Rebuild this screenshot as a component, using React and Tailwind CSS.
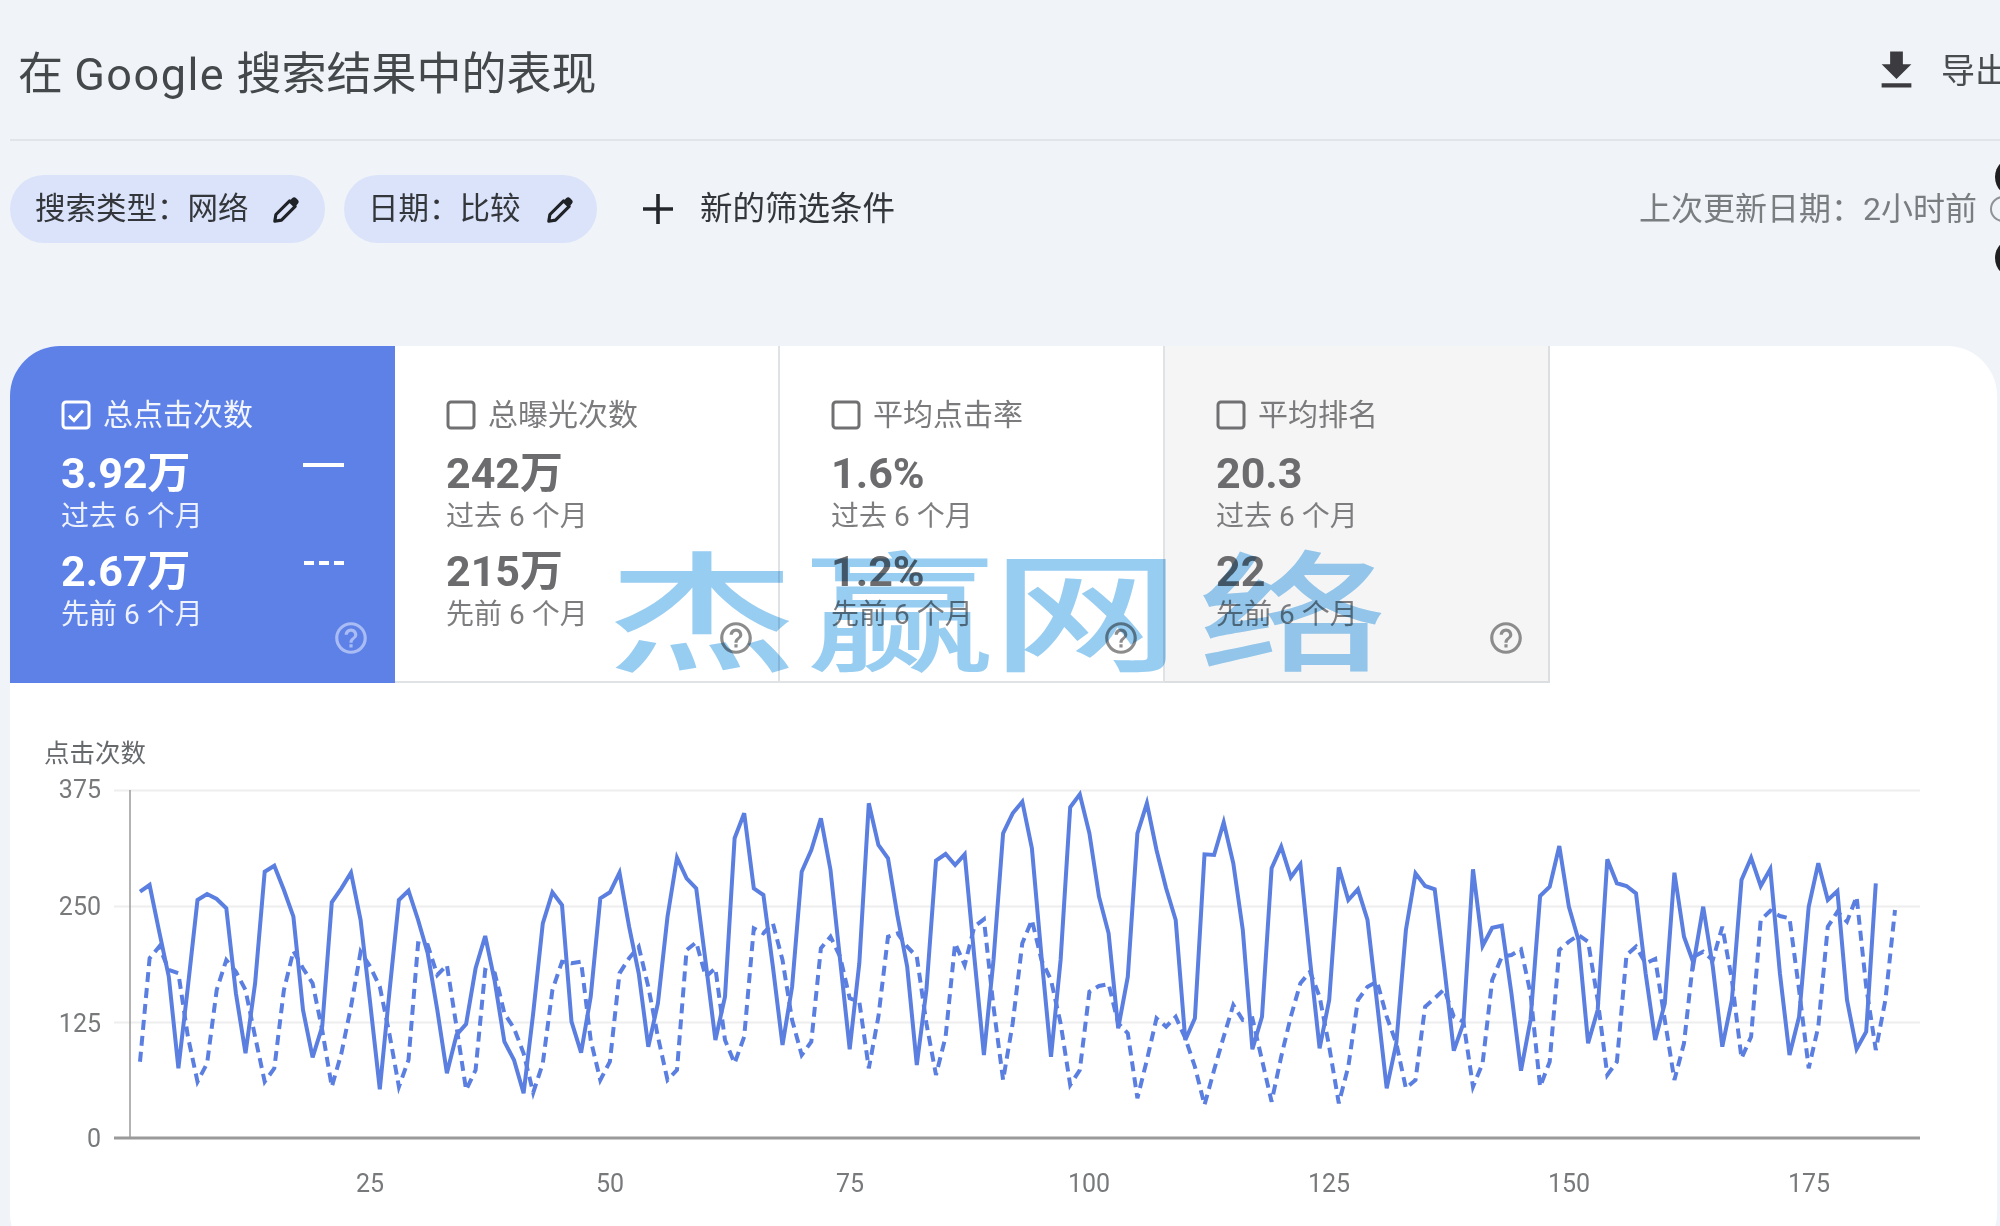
const solidA = [515,495,635,770,1045,800,540,522,537,565,820,1000,790,455,437,510,590,870,1012,920,547,505,458,600,850,1108,820,540,512,600,700,870,1060,945,912,745,648,785,965,1020,1120,880,610,517,555,905,998,830,535,517,458,620,760,980,850,590,413];
const solidB = [355,385,610,840,710,235,160,385,405,620,855,680,335,270,175,330,600,868,610,130,255,295,470,620,915,690,302,282,315,283,590,885,600,220,160,125,265,590,890,600,142,103,220,410,520,805,650,220,130,270,385,480,840,775,283,285,187,310,510,868,770,325,260,352,313,600,865,720,322,420,388,480,730,985,850,510,340,378,388,620,872,790,328,558,503,497,700,932,780,408,380,258,440,540,850,750,298,370,378,400,640,840,730,338,530,610,440,620,860,720,360,293,378,327,640,885,770,440,310,420,393,720,867,815,370];
const dashA = [1025,715,680,750,760,950,1085,1030,810,720,755,810,950,1085,1045,810,693,745,790,930,1100,1000,860,695,740,800,940,1100,1020,670,675,765,735,920,1110,1050,750,760,880,925,1000,1118,1030,810,725,730,725,960,1080,1025,760,715,680,800,950,1080,1050];
const dashB = [570,547,650,625,840,910,830,505,520,490,600,780,885,845,565,530,590,715,725,925,770,530,520,560,590,790,945,830,550,615,500,478,740,960,790,550,480,600,660,790,975,930,695,678,672,790,820,1015,900,775,800,770,835,920,1035,930,830,735,780,775,900,1025,890,770,670,635,710,860,1030,920,720,680,665,770,850,985,960,740,715,688,770,785,980,910,660,590,585,568,700,980,905,570,545,525,545,720,945,905,585,560,610,597,780,960,850,590,575,600,500,660,895,830,480,452,468,475,690,925,800,500,455,485,410,680,870,720,450];

const toPts = (a, b) =>
  [...a.map((z) => 720 + z / 3), ...b.map((z) => 760 + z / 3)]
    .map((y, i) => `${(140 + i * 9.59).toFixed(1)},${y.toFixed(1)}`)
    .join(" ");

const HELP = "M11 18h2v-2h-2v2zm1-16C6.48 2 2 6.48 2 12s4.48 10 10 10 10-4.48 10-10S17.52 2 12 2zm0 18c-4.41 0-8-3.59-8-8s3.59-8 8-8 8 3.59 8 8-3.59 8-8 8zm0-14c-2.21 0-4 1.79-4 4h2c0-1.1.9-2 2-2s2 .9 2 2c0 2-3 1.75-3 5h2c0-2.25 3-2.5 3-5 0-2.21-1.79-4-4-4z";

function Help({ className }) {
  return (
    <svg viewBox="0 0 24 24" className={className} fill="currentColor">
      <path d={HELP} />
    </svg>
  );
}

function Pencil() {
  return (
    <svg viewBox="0 0 26 26" className="w-[29px] h-[29px] shrink-0 text-[#1f2226]">
      <path d="M2.5 23.5l1-6L15.8 5.2l5 5L8.5 22.5z" fill="none" stroke="currentColor" strokeWidth="2.8" strokeLinejoin="round" />
      <path d="M15.5 5.5l2.5-2.5a2.6 2.6 0 0 1 3.7 0l1.3 1.3a2.6 2.6 0 0 1 0 3.7l-2.5 2.5z" fill="currentColor" />
    </svg>
  );
}

function Chip({ text, className }) {
  return (
    <div className={`flex items-center h-[68px] rounded-full bg-[#dae3f9] text-[#33363a] text-[30.5px] ${className}`}>
      <span>{text}</span>
      <Pencil />
    </div>
  );
}

function Tab({ label, v1, v2, active, className }) {
  const num = active ? "text-white" : "text-[#6c6c6e]";
  const sub = active ? "text-[#eef2fd]" : "text-[#7d7d7f]";
  return (
    <div className={`relative w-[385px] h-[337px] shrink-0 pl-[51px] pr-[51px] pt-[52px] ${className}`}>
      <div className={`flex items-center h-[34px] gap-[12px] text-[30px] leading-[34px] ${active ? "text-[#f4f6fe]" : "text-[#7b7b7d]"}`}>
        {active ? (
          <svg viewBox="0 0 30 30" className="w-[30px] h-[30px] shrink-0">
            <rect x="2" y="2" width="26" height="26" rx="3" fill="none" stroke="white" strokeWidth="3" />
            <path d="M8 15.5l5 5 9-10" fill="none" stroke="white" strokeWidth="3" />
          </svg>
        ) : (
          <svg viewBox="0 0 30 30" className="w-[30px] h-[30px] shrink-0">
            <rect x="2" y="2" width="26" height="26" rx="3" fill="none" stroke="#707072" strokeWidth="3" />
          </svg>
        )}
        <span>{label}</span>
      </div>
      <div className="flex justify-between mt-[16px] h-[50px]">
        <div className={`text-[43px] leading-[50px] font-bold ${num}`}>{v1}</div>
        {active && <div className="w-[41px] h-[4px] mt-[15px] bg-white" />}
      </div>
      <div className={`h-[34px] text-[28px] leading-[34px] mt-[2px] ${sub}`}>过去 6 个月</div>
      <div className="flex justify-between mt-[12px] h-[50px]">
        <div className={`text-[43px] leading-[50px] font-bold ${num}`}>{v2}</div>
        {active && (
          <div className="flex gap-[5px] mt-[15px] -ml-[3px]">
            <div className="w-[10px] h-[4px] bg-white" />
            <div className="w-[10px] h-[4px] bg-white" />
            <div className="w-[10px] h-[4px] bg-white" />
          </div>
        )}
      </div>
      <div className={`h-[34px] text-[28px] leading-[34px] mt-[2px] ${sub}`}>先前 6 个月</div>
      <Help className={`absolute left-[322px] top-[273px] w-[38px] h-[38px] ${active ? "text-[#a9bcf3]" : "text-[#8c8c8c]"}`} />
    </div>
  );
}

export default function App() {
  const grid = [790.5, 906.5, 1022.5];
  return (
    <div lang="zh-CN" className="relative w-full h-[1226px] overflow-hidden bg-[#f0f4f8] font-[Roboto,'Noto_Sans_CJK_SC',sans-serif]">
      <header className="ml-[10px] h-[141px] pl-[8px] pt-[10px] pr-0 flex items-center justify-between border-b-2 border-[#e1e5e9]">
        <h1 className="text-[45px] leading-[60px] text-[#45484b] whitespace-nowrap">
          在 <span className="tracking-[1.5px]">Google</span> 搜索结果中的表现
        </h1>
        <div className="flex items-center gap-[19px] -mr-[9px] -mt-[8px] shrink-0">
          <svg viewBox="0 0 24 24" className="w-[51px] h-[51px]" fill="#3c3c40">
            <path d="M19 9h-4V3H9v6H5l7 7 7-7zM5 18v2h14v-2H5z" />
          </svg>
          <span className="text-[34px] leading-[40px] text-[#4a4d50] whitespace-nowrap">导出</span>
        </div>
      </header>

      <div className="ml-[10px] h-[205px] pt-[34px]">
        <div className="flex items-center h-[68px]">
          <Chip text="搜索类型：网络" className="w-[315px] pl-[25px] gap-[23px]" />
          <Chip text="日期：比较" className="w-[253px] pl-[24px] gap-[25px] ml-[19px]" />
          <svg viewBox="0 0 30 30" className="w-[30px] h-[30px] ml-[46px] shrink-0">
            <path d="M15 0v30M0 15h30" stroke="#23262a" strokeWidth="3.6" fill="none" />
          </svg>
          <span className="ml-[27px] text-[32.5px] text-[#33363a] whitespace-nowrap">新的筛选条件</span>
          <span className="ml-auto text-[32px] text-[#7a7d80] whitespace-nowrap">上次更新日期：2小时前</span>
          <div className="w-[26px] h-[26px] ml-[13px] -mr-[16px] shrink-0 rounded-full border-[2px] border-[#8f9296]" />
        </div>
      </div>

      <main className="ml-[10px] w-[1987px] h-[917px] bg-white rounded-[50px] overflow-hidden relative">
        <div className="flex">
          <Tab label="总点击次数" v1="3.92万" v2="2.67万" active className="bg-[#5e81e8]" />
          <Tab label="总曝光次数" v1="242万" v2="215万" className="border-r-2 border-b-2 border-[#e0e3e6]" />
          <Tab label="平均点击率" v1="1.6%" v2="1.2%" className="border-r-2 border-b-2 border-[#e0e3e6]" />
          <Tab label="平均排名" v1="20.3" v2="22" className="bg-[#f5f5f6] border-r-2 border-b-2 border-[#dcdfe2]" />
        </div>

        <div className="pl-[34px] pt-[53px] h-[87px] text-[25.5px] leading-[34px] text-[#66696c]">点击次数</div>
        <svg viewBox="10 770 1980 440" className="block w-[1980px] h-[440px]">
          {grid.map((y) => (
            <line key={y} x1="114" x2="1920" y1={y} y2={y} stroke="#eeeeee" strokeWidth="2" />
          ))}
          <line x1="130" x2="130" y1="790" y2="1138" stroke="#9a9a9a" strokeWidth="1.5" />
          <line x1="114" x2="1920" y1="1138" y2="1138" stroke="#9a9a9a" strokeWidth="3" />
          {[["375", 789], ["250", 906], ["125", 1023], ["0", 1138]].map(([t, y]) => (
            <text key={t} x="101" y={y + 9} textAnchor="end" fontSize="25" fill="#77797b">{t}</text>
          ))}
          {[["25", 370], ["50", 610], ["75", 850], ["100", 1089], ["125", 1329], ["150", 1569], ["175", 1809]].map(([t, x]) => (
            <text key={t} x={x} y="1192" textAnchor="middle" fontSize="25" fill="#77797b">{t}</text>
          ))}
          <polyline points={toPts(dashA, dashB)} fill="none" stroke="#5b7fe0" strokeWidth="4" strokeDasharray="10 6" />
          <polyline points={toPts(solidA, solidB)} fill="none" stroke="#5b7fe0" strokeWidth="4" />
        </svg>

        <div className="absolute left-[597px] top-[196px] flex text-[130px] leading-[150px] font-medium text-[#98cdf2] mix-blend-multiply pointer-events-none">
          <span className="block w-[198px] origin-left scale-x-[1.46]">杰</span>
          <span className="block w-[186px] origin-left scale-x-[1.46]">赢</span>
          <span className="block w-[207px] origin-left scale-x-[1.46]">网</span>
          <span className="block w-[181px] origin-left scale-x-[1.46]">络</span>
        </div>
      </main>

      <div className="absolute left-[1995px] top-[157px] w-[40px] h-[40px] rounded-full bg-[#1f1f21]" />
      <div className="absolute left-[1995px] top-[238px] w-[40px] h-[40px] rounded-full bg-[#1f1f21]" />
    </div>
  );
}
